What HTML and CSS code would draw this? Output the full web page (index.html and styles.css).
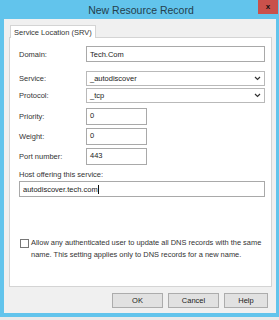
FILE: index.html
```html
<!DOCTYPE html>
<html lang="en">
<head>
  <meta charset="UTF-8" />
  <title>New Resource Record</title>
  <link rel="stylesheet" href="styles.css">
</head>
<body>
  <div class="window">
    <div class="titlebar">
      <span class="title">New Resource Record</span>
      <span class="close">x</span>
    </div>
    <div class="client">
      <div class="tab">Service Location (SRV)</div>
      <div class="panel">
        <div class="row row-domain">
          <label class="lbl">Domain:</label>
          <div class="field wide">Tech.Com</div>
        </div>
        <div class="row row-service">
          <label class="lbl">Service:</label>
          <div class="field wide select">_autodiscover
            <svg class="chev" width="7" height="5" viewBox="0 0 7 5"><path d="M1 1 L3.5 3.5 L6 1" fill="none" stroke="#333" stroke-width="1.2"/></svg>
          </div>
        </div>
        <div class="row row-protocol">
          <label class="lbl">Protocol:</label>
          <div class="field wide select">_tcp
            <svg class="chev" width="7" height="5" viewBox="0 0 7 5"><path d="M1 1 L3.5 3.5 L6 1" fill="none" stroke="#333" stroke-width="1.2"/></svg>
          </div>
        </div>
        <div class="row row-num">
          <label class="lbl">Priority:</label>
          <div class="field small">0</div>
        </div>
        <div class="row row-num">
          <label class="lbl">Weight:</label>
          <div class="field small">0</div>
        </div>
        <div class="row row-num">
          <label class="lbl">Port number:</label>
          <div class="field small">443</div>
        </div>
        <div class="host-label">Host offering this service:</div>
        <div class="field full">autodiscover.tech.com<span class="caret"></span></div>
        <div class="check-row">
          <span class="checkbox"></span>
          <p class="check-text">Allow any authenticated user to update all DNS records with the same name. This setting applies only to DNS records for a new name.</p>
        </div>
      </div>
      <div class="buttons">
        <button class="btn">OK</button>
        <button class="btn">Cancel</button>
        <button class="btn btn-help">Help</button>
      </div>
    </div>
  </div>
</body>
</html>
```

FILE: styles.css
```css
/* Global */
body {
  margin: 0;
  padding: 0;
  background: #e9e9e9;
  font-family: "Liberation Sans", Arial, sans-serif;
  color: #333;
}
.window {
  width: 279px;
  height: 317px;
  box-sizing: border-box;
  background: #62c4ec;
  padding: 0 3px 4px 4px;
  display: flex;
  flex-direction: column;
}
/* Title bar */
.titlebar {
  height: 19px;
  position: relative;
  display: flex;
  justify-content: center;
  align-items: center;
}
.title {
  font-size: 10.5px;
  color: #24404d;
  margin-left: 2px;
}
.close {
  position: absolute;
  top: 0;
  right: -2px;
  width: 20px;
  height: 14px;
  background: #c9514b;
  color: #111;
  font-weight: bold;
  font-size: 8px;
  line-height: 13px;
  text-align: center;
}
/* Client area */
.client {
  flex: 1;
  background: #f0f0f0;
  padding: 6px 4px 0 5px;
}
.tab {
  margin-left: 1px;
  width: 81px;
  height: 12px;
  border: 1px solid #d4d4d4;
  border-bottom: none;
  background: #fff;
  font-size: 7.5px;
  line-height: 13px;
  padding-left: 3px;
  position: relative;
  z-index: 1;
  margin-bottom: -1px;
}
.panel {
  height: 240px;
  border: 1px solid #d4d4d4;
  background: #fff;
  padding: 8px 6px 0 9px;
}
.row {
  display: flex;
  align-items: center;
}
.lbl {
  width: 67px;
  font-size: 7.5px;
}
.field {
  box-sizing: border-box;
  border: 1px solid #a9a9a9;
  background: #fff;
  font-size: 7.5px;
  padding-left: 3px;
  display: flex;
  align-items: center;
  color: #222;
}
.wide {
  width: 179px;
  height: 16px;
}
.select {
  height: 15px;
  border-color: #b9b9b9;
  justify-content: space-between;
  padding-right: 3px;
}
.small {
  width: 61px;
  height: 17px;
  align-items: flex-start;
  padding-top: 2px;
}
.row-service {
  margin-top: 9px;
}
.row-protocol {
  margin-top: 2px;
}
.row-num {
  margin-top: 5px;
}
.row-num + .row-num {
  margin-top: 3px;
}
.host-label {
  font-size: 7.5px;
  margin-top: 4px;
  height: 11px;
  line-height: 11px;
}
.full {
  width: 246px;
  height: 16px;
  margin-top: 1px;
}
.caret {
  display: inline-block;
  width: 1px;
  height: 9px;
  background: #111;
}
/* Checkbox */
.check-row {
  display: flex;
  align-items: flex-start;
  margin-top: 40px;
  padding-left: 1px;
}
.checkbox {
  width: 9px;
  height: 9px;
  box-sizing: border-box;
  border: 1px solid #777;
  background: #fff;
  flex-shrink: 0;
  margin-top: 2px;
}
.check-text {
  margin: 0 0 0 2px;
  font-size: 7.45px;
  line-height: 12px;
  width: 240px;
}
/* Buttons */
.buttons {
  display: flex;
  justify-content: flex-end;
  gap: 5px;
  margin-top: 6px;
  padding-right: 4px;
}
.btn {
  width: 51px;
  height: 15px;
  padding: 0;
  border: 1px solid #acacac;
  background: #e1e1e1;
  font-family: "Liberation Sans", Arial, sans-serif;
  font-size: 7.5px;
  color: #222;
}
.btn-help {
  width: 44px;
}
```
